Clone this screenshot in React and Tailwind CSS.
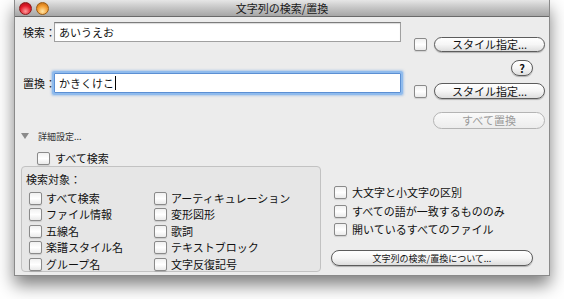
import React from "react";

function Check({ className = "" }) {
  return (
    <span
      className={
        "inline-block shrink-0 w-[13px] h-[13px] rounded-[2px] border border-[#8a8a8a] bg-gradient-to-b from-[#f0f0f0] via-white to-[#eaeaea] shadow-[0_1px_1px_rgba(0,0,0,0.12)] " +
        className
      }
    />
  );
}

function Btn({ children, className = "", disabled = false }) {
  return (
    <div
      className={
        "flex items-center justify-center rounded-full border leading-none whitespace-nowrap " +
        (disabled
          ? "border-[#b4b4b4] text-[#9a9a9a] bg-gradient-to-b from-[#fafafa] to-[#ececec]"
          : "border-[#5c5c5c] text-[#111] bg-gradient-to-b from-white via-[#f6f6f6] to-[#dedede] shadow-[0_1px_1px_rgba(0,0,0,0.25)]") +
        " " +
        className
      }
    >
      {children}
    </div>
  );
}

function Opt({ label }) {
  return (
    <div className="flex items-center h-[16.5px]">
      <Check />
      <span className="ml-[4px] text-[11px] leading-none text-[#111] whitespace-nowrap">{label}</span>
    </div>
  );
}

export default function App() {
  const left = ["すべて検索", "ファイル情報", "五線名", "楽譜スタイル名", "グループ名"];
  const right = ["アーティキュレーション", "変形図形", "歌詞", "テキストブロック", "文字反復記号"];
  return (
    <div className="w-[564px] h-[299px] bg-white pl-[14px] font-['Noto_Sans_CJK_JP',sans-serif] overflow-hidden">
      <div className="w-[536px] h-[276px] flex flex-col border-x border-b border-[#8a8a8a] shadow-[0_9px_16px_rgba(0,0,0,0.5)] bg-[#ececec]">
        {/* title bar */}
        <div className="relative h-[17px] flex items-center shrink-0 bg-gradient-to-b from-[#e6e6e6] via-[#c4c4c4] to-[#a6a6a6] border-b border-[#6a6a6a]">
          <div className="flex gap-[4px] pl-[4px]">
            <span className="w-[13px] h-[13px] rounded-full border border-[#8c1b1b] bg-[radial-gradient(circle_at_50%_75%,#ff9a9a,#e21b2a_55%,#9e0d15)]" />
            <span className="w-[13px] h-[13px] rounded-full border border-[#9a5a12] bg-[radial-gradient(circle_at_50%_75%,#ffe6a8,#f29a2e_55%,#b5620e)]" />
          </div>
          <div className="absolute inset-0 flex items-center justify-center text-[11px] leading-none text-[#1a1a1a]">
            文字列の検索/置換
          </div>
        </div>

        {/* content */}
        <div className="flex flex-col text-[#111]">
          <div className="flex h-[113px]">
            <div className="w-[393px] pl-[8px] pt-[5px]">
              <div className="flex items-center h-[20px]">
                <span className="w-[31px] text-[11px] leading-none whitespace-nowrap">検索：</span>
                <div className="w-[347px] h-[20px] flex items-center bg-white border border-[#a0a0a0] border-t-[#7c7c7c] shadow-[inset_0_1px_1px_rgba(0,0,0,0.15)] pl-[4px] text-[11px] leading-none">
                  あいうえお
                </div>
              </div>
              <div className="flex items-center h-[20px] mt-[31px]">
                <span className="w-[31px] text-[11px] leading-none whitespace-nowrap">置換：</span>
                <div className="w-[347px] h-[20px] flex items-center bg-white border border-[#5b8fd3] shadow-[0_0_0_2px_#8fbbed,0_0_2px_3px_rgba(120,170,230,0.5)] pl-[4px] text-[11px] leading-none rounded-[1px]">
                  かきくけこ
                  <span className="inline-block w-[1px] h-[14px] bg-black ml-[1px]" />
                </div>
              </div>
            </div>
            <div className="flex-1 flex flex-col items-end pr-[4px] pt-[20px]">
              <div className="flex items-center h-[15px]">
                <Check />
                <Btn className="ml-[7px] w-[111px] h-[15px] text-[11px]">スタイル指定...</Btn>
              </div>
              <Btn className="mt-[8px] mr-[12px] w-[22px] h-[16px] text-[11px] font-bold">?</Btn>
              <div className="flex items-center h-[16px] mt-[7px]">
                <Check />
                <Btn className="ml-[7px] w-[111px] h-[16px] text-[11px]">スタイル指定...</Btn>
              </div>
              <Btn disabled className="mt-[13px] w-[112px] h-[17px] text-[11px]">すべて置換</Btn>
            </div>
          </div>

          {/* disclosure */}
          <div className="flex items-center h-[12px] pl-[6px]">
            <svg width="8" height="7" viewBox="0 0 8 7">
              <polygon points="0,0 8,0 4,6" fill="#8a8a8a" />
            </svg>
            <span className="ml-[9px] text-[9px] leading-none text-[#333]">詳細設定...</span>
          </div>

          <div className="flex items-center h-[13px] mt-[10px] pl-[22px]">
            <Check />
            <span className="ml-[5px] text-[11px] leading-none">すべて検索</span>
          </div>

          <div className="flex mt-[1px]">
            <div className="ml-[6px] w-[300px] h-[106px] rounded-[4px] border border-[#c2c2c2] bg-[#e6e6e6] pl-[4px] pt-[7px]">
              <div className="text-[11px] leading-none h-[12px]">検索対象：</div>
              <div className="flex mt-[4px] pl-[3px]">
                <div className="w-[125px] flex flex-col">
                  {left.map((l) => (
                    <Opt key={l} label={l} />
                  ))}
                </div>
                <div className="flex flex-col">
                  {right.map((l) => (
                    <Opt key={l} label={l} />
                  ))}
                </div>
              </div>
            </div>
            <div className="flex flex-col ml-[10px] pt-[20px]">
              <div className="flex flex-col gap-[5.5px] pl-[3px]">
                <div className="flex items-center h-[13px]">
                  <Check />
                  <span className="ml-[5px] text-[11px] leading-none">大文字と小文字の区別</span>
                </div>
                <div className="flex items-center h-[13px]">
                  <Check />
                  <span className="ml-[5px] text-[11px] leading-none">すべての語が一致するもののみ</span>
                </div>
                <div className="flex items-center h-[13px]">
                  <Check />
                  <span className="ml-[5px] text-[11px] leading-none">開いているすべてのファイル</span>
                </div>
              </div>
              <Btn className="mt-[14px] w-[202px] h-[16px] text-[9px]">文字列の検索/置換について...</Btn>
            </div>
          </div>
        </div>
      </div>
    </div>
  );
}
